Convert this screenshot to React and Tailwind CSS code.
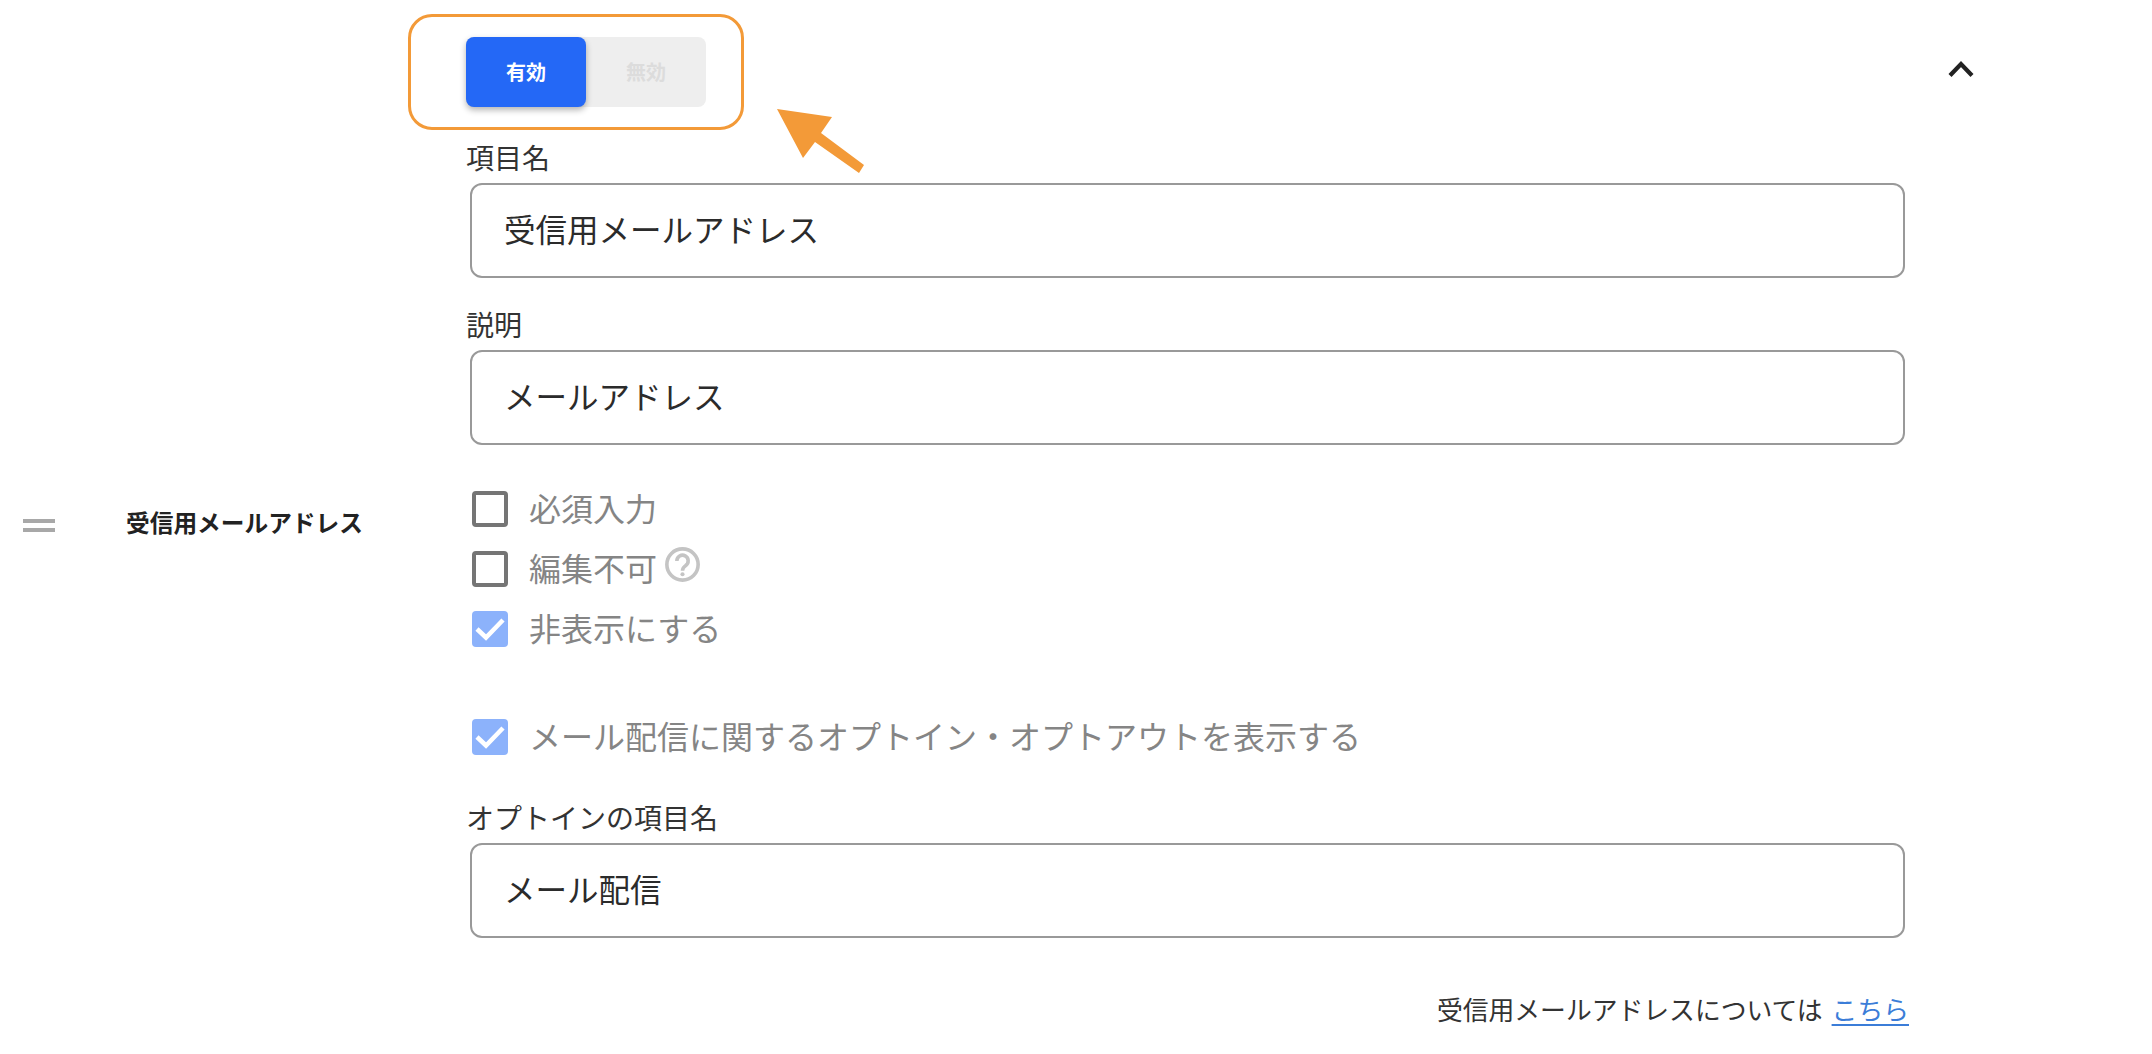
import React from 'react';

const Field = ({ label, value }) => (
  <div className="flex flex-col">
    <label className="pb-[2px] text-[28px] leading-[34px] text-[#333]">{label}</label>
    <div className="ml-[4px] mt-[7px] h-[95px] w-[1435px] rounded-[12px] border-2 border-[#999] bg-white flex items-center pl-[32px] pb-[4px] text-[31.5px] text-[#2b2b2b]">
      {value}
    </div>
  </div>
);

const Check = ({ checked, children }) => (
  <div className="flex items-center h-[36px]">
    {checked ? (
      <span className="ml-[6px] w-[36px] h-[36px] rounded-[4px] bg-[#8cb2fb] flex items-center justify-center">
        <svg viewBox="0 0 36 36" className="w-[36px] h-[36px]" fill="none">
          <path d="M5 18 L14 26.5 L31 9" stroke="#fff" strokeWidth="4.5" />
        </svg>
      </span>
    ) : (
      <span className="ml-[6px] w-[36px] h-[36px] rounded-[4px] border-[4px] border-[#757575] bg-white" />
    )}
    <span className="ml-[21px] pb-[4px] text-[32px] leading-[36px] text-[#858585] flex items-center">{children}</span>
  </div>
);

export default function App() {
  return (
    <div className="relative flex w-[2152px] h-[1054px] bg-white overflow-hidden font-['Noto_Sans_CJK_JP','Noto_Sans',sans-serif]">
      {/* left: drag handle + item name */}
      <div className="w-[466px] shrink-0 flex items-center h-full pb-[8px]">
        <div className="ml-[23px] mt-[5px] w-[32px] flex flex-col gap-[5px]">
          <div className="h-[4px] bg-[#a8a8a8]" />
          <div className="h-[4px] bg-[#a8a8a8]" />
        </div>
        <div className="ml-[71px] text-[23.7px] font-bold text-[#222]">受信用メールアドレス</div>
      </div>

      {/* main column */}
      <div className="w-[1443px] shrink-0 pt-[37px]">
        <div className="flex w-[240px] h-[70px] rounded-[8px] bg-[#eee]">
          <div className="w-[120px] h-full rounded-[8px] bg-[#2468f6] shadow-[0_3px_6px_rgba(0,0,0,0.3)] flex items-center justify-center text-[20px] font-bold text-white">有効</div>
          <div className="w-[120px] h-full flex items-center justify-center text-[20px] font-bold text-[#dcdcdc]">無効</div>
        </div>
        <div className="mt-[33px]">
          <Field label="項目名" value="受信用メールアドレス" />
        </div>
        <div className="mt-[29px]">
          <Field label="説明" value="メールアドレス" />
        </div>
        <div className="mt-[46px] flex flex-col gap-[24px]">
          <Check>必須入力</Check>
          <Check>
            編集不可
            <svg viewBox="0 0 34 34" className="ml-[8px] -mt-[6px] w-[35px] h-[35px]" fill="none" stroke="#c4c4c4" strokeWidth="3.5">
              <circle cx="17" cy="17" r="15.2" />
              <path d="M11.5 13.5a5.5 5.5 0 1 1 8.5 4.6c-2 1.4-3 2.4-3 5" />
              <circle cx="17" cy="26.5" r="2" fill="#c4c4c4" stroke="none" />
            </svg>
          </Check>
          <Check checked>非表示にする</Check>
        </div>
        <div className="mt-[72px]">
          <Check checked>メール配信に関するオプトイン・オプトアウトを表示する</Check>
        </div>
        <div className="mt-[45px]">
          <Field label="オプトインの項目名" value="メール配信" />
        </div>
        <div className="mt-[53px] flex justify-end items-center text-[25.8px] leading-[36px] text-[#333]">
          <span>受信用メールアドレスについては</span>
          <a className="ml-[9px] text-[#3b7dd8] underline decoration-2 underline-offset-4" href="#">こちら</a>
        </div>
      </div>

      {/* collapse chevron */}
      <div className="pl-[39px] pt-[59px]">
        <svg viewBox="0 0 26 18" className="w-[26px] h-[18px]" fill="none">
          <path d="M2 16.5 L13 5 L24 16.5" stroke="#222" strokeWidth="4.2" />
        </svg>
      </div>

      {/* annotation overlay */}
      <div className="absolute left-[408px] top-[14px] w-[336px] h-[116px] rounded-[24px] border-[3px] border-[#f39a38]" />
      <svg className="absolute left-0 top-0 pointer-events-none" width="2152" height="1054" fill="#f39a38">
        <polygon points="777,109 832,117 821,133 864,165 859,173 815,142 803,158" />
      </svg>
    </div>
  );
}
